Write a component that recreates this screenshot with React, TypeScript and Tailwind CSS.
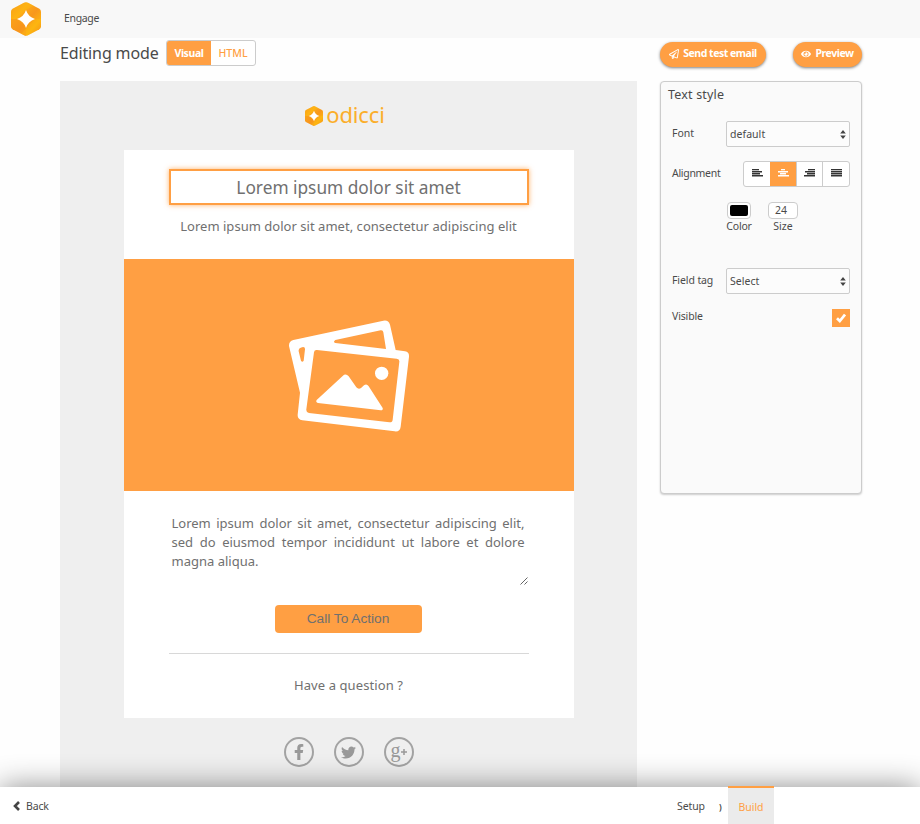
import type { ReactNode } from 'react';
import { FaRegPaperPlane, FaEye, FaFacebookF, FaTwitter } from 'react-icons/fa';

function Logo({ className, id }: { className: string; id: string }) {
  return (
    <svg viewBox="0 0 90 102" preserveAspectRatio="none" className={className}>
      <defs>
        <linearGradient id={id} x1="0" y1="0" x2="1" y2="1">
          <stop offset="0" stopColor="#f58a1f" />
          <stop offset="0.3" stopColor="#fdab18" />
          <stop offset="0.55" stopColor="#f8971d" />
          <stop offset="0.75" stopColor="#fdb012" />
          <stop offset="1" stopColor="#f27b21" />
        </linearGradient>
      </defs>
      <path
        d="M39 2Q45-1 51 2L85 20Q90 23 90 29V73Q90 79 85 82L51 100Q45 103 39 100L5 82Q0 79 0 73V29Q0 23 5 20Z"
        fill={`url(#${id})`}
      />
      <path d="M5 20L39 2Q45-1 51 2L68 11L45 24L18 51H0V29Q0 23 5 20Z" fill="#ffc20e" opacity=".35" />
      <path d="M0 51L18 51L45 78V102L5 82Q0 79 0 73Z" fill="#f7931e" opacity=".45" />
      <path d="M45 78L72 51H90V73Q90 79 85 82L51 100L30 96Z" fill="#ffc20e" opacity=".3" />
      <path d="M45 24Q51 44 72 51Q51 58 45 78Q39 58 18 51Q39 44 45 24Z" fill="#fff" />
    </svg>
  );
}

function AlignIcon({ rows }: { rows: number[][] }) {
  return (
    <svg viewBox="0 0 12 9" className="h-[9px] w-3" shapeRendering="crispEdges" fill="currentColor">
      {rows.map(([x, w], i) => (
        <g key={i}>
          <rect x={x} y={i * 2} width={w} height="1" />
          <rect x={x} y={i * 2 + 1} width={w} height="1" opacity={i === 0 ? 0.3 : 0.5} />
        </g>
      ))}
    </svg>
  );
}

const alignments = [
  { rows: [[1, 7], [1, 10], [1, 8], [1, 11]], active: false },
  { rows: [[4, 4], [1, 10], [3, 6], [1, 11]], active: true },
  { rows: [[5, 7], [2, 10], [4, 8], [1, 11]], active: false },
  { rows: [[1, 11], [1, 11], [1, 11], [1, 11]], active: false },
];

function Select({ children }: { children: ReactNode }) {
  return (
    <div className="flex h-[26px] w-[124px] items-center justify-between rounded-[2px] border border-[#ccc] bg-[#fcfcfc] pr-[3px] pl-[3px] text-[10.5px]">
      <span className="pt-px tracking-[0.05px]">{children}</span>
      <svg viewBox="0 0 6 9" className="h-[9px] w-[6px]" fill="#444">
        <path d="M3 0L5.8 3.5H.2ZM3 9L.2 5.5H5.8Z" />
      </svg>
    </div>
  );
}

function Pill({ children, className }: { children: ReactNode; className: string }) {
  return (
    <button
      className={`flex h-[25px] items-center justify-center gap-1 rounded-full bg-[#ff9f43] text-[10.5px] font-bold text-white shadow-[0_1px_3px_rgba(0,0,0,0.5)] ${className}`}
    >
      {children}
    </button>
  );
}

function Round({ children }: { children: ReactNode }) {
  return (
    <div className="flex size-[30px] items-center justify-center rounded-full border-2 border-[#a3a3a3] text-[#999]">
      {children}
    </div>
  );
}

export default function App() {
  return (
    <div className="flex h-[824px] w-[920px] flex-col overflow-hidden bg-[#fefefe] font-['Noto_Sans','Open_Sans',sans-serif] text-[#4a4a4a]">
      <header className="flex h-[38px] shrink-0 items-center bg-[#f8f8f8] pl-[11px]">
        <Logo id="brand" className="h-[34px] w-[30px]" />
        <span className="ml-[23px] text-[10.5px] tracking-[-0.35px]">Engage</span>
      </header>

      <main className="flex min-h-0 flex-1 pl-[60px]">
        <section className="flex w-[577px] flex-col">
          <div className="flex h-[43px] shrink-0 items-start pt-[2px]">
            <h1 className="w-[106px] text-[16px] leading-[26px] tracking-[-0.13px] whitespace-nowrap">Editing mode</h1>
            <div className="flex h-[26px] w-[90px] overflow-hidden rounded-[3px] border border-[#ccc] bg-white text-[10.5px] leading-6">
              <span className="w-11 bg-[#ff9f43] text-center font-bold tracking-[-0.4px] text-white">Visual</span>
              <span className="flex-1 text-center font-medium text-[#ff9f43]">HTML</span>
            </div>
          </div>

          <div className="flex min-h-0 flex-1 flex-col items-center bg-[#efefef]">
            <div className="flex h-[69px] w-full shrink-0 items-center justify-center pr-[7px] pb-[3px]">
              <Logo id="mail" className="mt-[4px] h-5 w-[18px]" />
              <span className="ml-[3px] text-[22px] leading-[30px] tracking-[-0.15px] text-[#fbae2b]">odicci</span>
            </div>

            <article className="flex h-[568px] w-[450px] shrink-0 flex-col items-center bg-white text-[#707070]">
              <div className="mt-[19px] flex h-9 w-[360px] items-center justify-center border-2 border-[#ff9f43] pt-[2px] text-[17.3px] shadow-[0_0_5px_rgba(255,159,67,0.8)]">
                <span className="whitespace-nowrap">Lorem ipsum dolor sit amet</span>
              </div>
              <p className="mt-[11px] h-[43px] text-[13px] leading-5 tracking-[0.03px] whitespace-nowrap">
                Lorem ipsum dolor sit amet, consectetur adipiscing elit
              </p>
              <div className="flex h-[232px] w-full items-center justify-center bg-[#ff9f43] pt-[2px]">
                <svg viewBox="54 60 366 336" className="h-28 w-[122px]" fill="#fff">
                  <path
                    fillRule="evenodd"
                    d="M57 138Q56 124 70 120L340 62Q355 59 360 74L377 150L405 154Q418 156 417 170L392 380Q390 396 374 394L97 361Q82 358 83 344L90 278ZM141 150Q133 149 132 157L109 328Q108 337 117 339L358 367Q367 368 368 359L388 185Q389 177 380 176ZM196 120L332 91Q339 90 340 97L348 147L196 129Q188 126 196 120ZM92 143Q106 138 105 148L101 182Q97 188 93 182L86 154Q85 145 92 143Z"
                  />
                  <path d="M140 300L218 228Q227 219 236 229L259 262Q266 270 274 263L282 256Q290 250 296 259L338 324Q340 331 332 331L144 309Q136 306 140 300Z" />
                  <circle cx="335" cy="220" r="20" />
                </svg>
              </div>
              <div className="flex h-[95px] w-[360px] flex-col pt-[23px] pr-1 pl-[3px]">
                <p className="text-justify text-[13px] leading-[19px]">
                  Lorem ipsum dolor sit amet, consectetur adipiscing elit, sed do eiusmod tempor incididunt ut labore et dolore
                  magna aliqua.
                </p>
                <svg viewBox="0 0 8 8" className="mt-[6px] -mr-[3px] size-2 self-end" stroke="#555" strokeWidth="0.9">
                  <path d="M0.5 7.5L7.5 .5M4.5 7.5L7.5 4.5" />
                </svg>
              </div>
              <button className="mt-[19px] h-7 w-[147px] rounded-[4px] bg-[#ff9f43] pr-px font-['Liberation_Sans',Arial,sans-serif] text-[13.7px] leading-7">
                Call To Action
              </button>
              <div className="mt-5 h-px w-[360px] bg-[#d8d8d8]" />
              <p className="mt-[21px] text-[13px] leading-5 tracking-[0.1px]">Have a question ?</p>
            </article>

            <div className="mt-[19px] flex gap-5">
              <Round>
                <FaFacebookF className="size-4" />
              </Round>
              <Round>
                <FaTwitter className="size-[15px]" />
              </Round>
              <Round>
                <span className="-mt-1 font-['Liberation_Serif',serif] text-[20px] leading-5">g</span>
                <svg viewBox="0 0 6 6" className="size-[6px]" stroke="currentColor" strokeWidth="1.5">
                  <path d="M3 0V6M0 3H6" />
                </svg>
              </Round>
            </div>
          </div>
        </section>

        <aside className="ml-[23px] w-[202px]">
          <div className="flex h-[43px] items-start justify-between pt-[3.5px]">
            <Pill className="w-[106px]">
              <FaRegPaperPlane className="size-[10px]" />
              <span className="tracking-[-0.48px] whitespace-nowrap">Send test email</span>
            </Pill>
            <Pill className="w-[69px]">
              <FaEye className="size-[10px]" />
              <span className="tracking-[-0.45px]">Preview</span>
            </Pill>
          </div>

          <div className="h-[413px] rounded-[4px] border border-[#ccc] bg-[#fafafa] pr-[11px] pl-[11px] text-[10.5px] shadow-[0_1px_2px_rgba(0,0,0,0.2)]">
            <h2 className="-ml-[4px] h-[39px] pt-[3px] text-[12.5px] leading-5 tracking-[0.18px]">Text style</h2>
            <div className="flex items-center justify-between">
              <span className="pb-px">Font</span>
              <Select>default</Select>
            </div>
            <div className="mt-[14px] flex items-center justify-between">
              <span className="pb-px tracking-[-0.3px]">Alignment</span>
              <div className="flex h-[26px] w-[107px] overflow-hidden rounded-[3px] border border-[#ccc] bg-white">
                {alignments.map((a, i) => (
                  <span
                    key={i}
                    className={`flex flex-1 items-center justify-center pb-px ${i > 1 ? 'border-l border-[#ccc]' : ''} ${a.active ? 'bg-[#ff9f43] text-white' : 'text-[#333]'}`}
                  >
                    <AlignIcon rows={a.rows} />
                  </span>
                ))}
              </div>
            </div>
            <div className="mt-[15px] flex h-[66px] pl-[54px] leading-[14px]">
              <div className="flex w-[26px] flex-col items-center">
                <div className="flex h-[17px] w-6 items-center justify-center rounded-[4px] border border-[#ccc] bg-white">
                  <div className="h-[11px] w-[18px] rounded-[2px] bg-black" />
                </div>
                <span className="tracking-[-0.2px]">Color</span>
              </div>
              <div className="ml-4 flex w-[30px] flex-col items-center">
                <div className="h-[17px] w-[30px] rounded-[4px] border border-[#ccc] bg-white pr-1 text-center">24</div>
                <span>Size</span>
              </div>
            </div>
            <div className="flex items-center justify-between">
              <span className="pb-px tracking-[-0.1px]">Field tag</span>
              <Select>Select</Select>
            </div>
            <div className="mt-[15px] flex h-[18px] items-center justify-between">
              <span className="pb-[3px] tracking-[-0.15px]">Visible</span>
              <span className="flex size-[18px] items-center justify-center bg-[#ff9f43]">
                <svg viewBox="0 0 10 10" className="size-[10px]" fill="none" stroke="#fff" strokeWidth="2.7">
                  <path d="M1 5.2L3.8 8L9 1.5" />
                </svg>
              </span>
            </div>
          </div>
        </aside>
      </main>

      <footer className="relative z-10 flex h-[37px] shrink-0 items-center bg-white pl-[13px] text-[10.5px] shadow-[0_0_30px_rgba(0,0,0,0.45)]">
        <svg viewBox="0 0 7 10" className="mt-[1px] h-[10px] w-[7px]" fill="none" stroke="#444" strokeWidth="2.6">
          <path d="M6 1L2 5L6 9" />
        </svg>
        <span className="mt-[2px] w-[652px] pl-[6px] tracking-[-0.15px]">Back</span>
        <span className="mt-[3px] w-[43px] pl-[5px] tracking-[-0.1px]">Setup</span>
        <span className="mt-[3px] ml-[4px] text-[8px] font-bold">)</span>
        <span className="-mt-px mr-[146px] ml-auto flex h-[38px] w-[46px] items-center justify-center border-t-2 border-[#ff9f43] bg-[#ebebeb] pt-[3px] text-[#ff9f43]">
          Build
        </span>
      </footer>
    </div>
  );
}
